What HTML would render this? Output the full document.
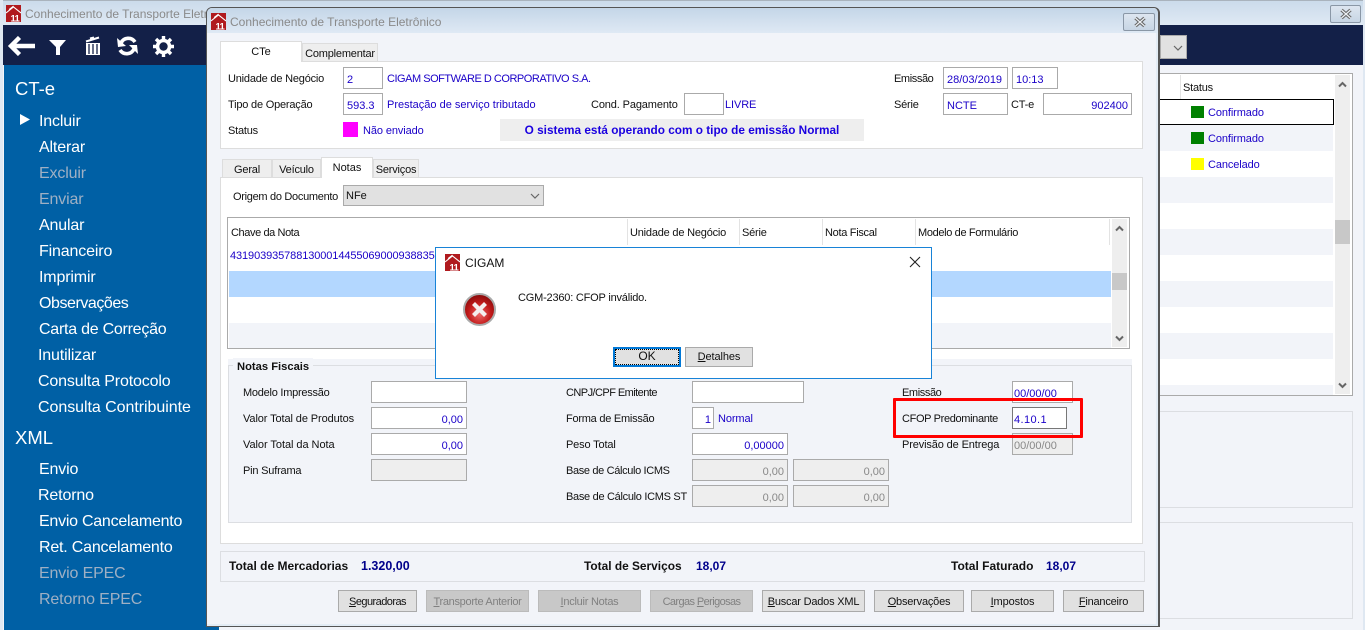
<!DOCTYPE html>
<html lang="pt">
<head>
<meta charset="utf-8">
<title>Conhecimento de Transporte Eletrônico</title>
<style>
html,body{margin:0;padding:0;width:1365px;height:630px;overflow:hidden;background:#f2f4f9}
body{position:relative;font:11px/16px "Liberation Sans",sans-serif;color:#111}
div{position:absolute;box-sizing:border-box;white-space:nowrap}
.l{height:18px;line-height:18px;letter-spacing:-.2px}
.b{color:#1a00c8;letter-spacing:-.1px}
.m{color:#fff;font-size:16px;left:39px;height:24px;line-height:24px;letter-spacing:-.15px}
.m.d{color:#9fb0c4}
.h{color:#fff;font-size:18.5px;left:15px;height:26px;line-height:26px}
.i{background:#fff;border:1px solid #aaa;color:#1a00c8;line-height:22px;height:22px;padding:1px 3px 0 3px;overflow:hidden}
.r{text-align:right}
.g{background:#eee;color:#888}
.btn{height:22px;top:590px;background:#e1e1e1;border:1px solid #aaa;text-align:center;line-height:22px;color:#111}
.off{background:#c8c8c8;color:#808080;border-color:#bbb}
.rw{left:1160px;width:173px;height:26px}
.tab{background:#eee;border:1px solid #ddd;text-align:center;letter-spacing:-.2px}
.bold{font-weight:bold;font-size:12px;letter-spacing:0}
.tot{color:#00008b;font-weight:bold;font-size:12px;letter-spacing:0}
</style>
</head>
<body>
<!-- outer window -->
<div style="left:0;top:0;width:1365px;height:25px;background:linear-gradient(#cbdbeb,#dfe9f4);border-top:1px solid #a9b3bd"></div>
<div style="left:0;top:0;width:3px;height:630px;background:#dfe8f2"></div>
<div style="left:1363px;top:0;width:2px;height:630px;background:#dfe8f2"></div>
<svg style="position:absolute;left:6px;top:5px" width="15" height="17" viewBox="0 0 15 17"><rect width="15" height="17" fill="#b01a1e"/><path d="M0 8L7.5 2L15 8" fill="none" stroke="#fff" stroke-width="1.1"/><path d="M3 4.5L7.5 1" stroke="#fff" stroke-width=".8"/><text x="4.5" y="16.5" font-size="9.5" font-weight="bold" letter-spacing="-.8" fill="#fff" font-family="Liberation Sans">11</text></svg>
<div class="l" style="left:25px;top:5px;font-size:12px;color:#8a8a8a;letter-spacing:0">Conhecimento de Transporte Eletrônico</div>
<div style="left:1330px;top:5px;width:31px;height:18px;border:1px solid #8a97a6;border-radius:2px;background:linear-gradient(#dde6f0,#c7d5e4)"><svg style="position:absolute;left:8px;top:2px" width="14" height="12" viewBox="0 0 14 12"><path d="M2.5 2L11.5 10M11.5 2L2.5 10" stroke="#666" stroke-width="3.4" fill="none"/><path d="M2.5 2L11.5 10M11.5 2L2.5 10" stroke="#eef2f6" stroke-width="1.2" fill="none"/></svg></div>

<div style="left:3px;top:25px;width:1360px;height:40px;background:#132048"></div>
<div style="left:4px;top:65px;width:215px;height:565px;background:#0060a5"></div>

<!-- toolbar icons -->
<svg style="position:absolute;left:8px;top:36px" width="27" height="20" viewBox="0 0 27 20"><path d="M11.5 1.5L3 10L11.5 18.5M4 10H27" fill="none" stroke="#fff" stroke-width="4.4"/></svg>
<svg style="position:absolute;left:49px;top:40px" width="18" height="15" viewBox="0 0 18 15"><path d="M0 0H17L11 7V15H7V7Z" fill="#fff"/></svg>
<svg style="position:absolute;left:85px;top:36px" width="16" height="19" viewBox="0 0 16 19"><path d="M1 5.5L14 1.5M5 2.5L9 1.5" stroke="#fff" stroke-width="2" fill="none"/><path d="M1 7H15V19H1Z" fill="#fff"/><path d="M4 8V18M8 8V18M12 8V18" stroke="#132048" stroke-width="1.3"/></svg>
<svg style="position:absolute;left:117px;top:36px" width="21" height="20" viewBox="0 0 21 20"><path d="M18 6A8 8 0 0 0 4 7" fill="none" stroke="#fff" stroke-width="3.6"/><path d="M0 2L9 10L1 11Z" fill="#fff"/><path d="M3 14A8 8 0 0 0 17 13" fill="none" stroke="#fff" stroke-width="3.6"/><path d="M21 18L12 9L20 9Z" fill="#fff"/></svg>
<svg style="position:absolute;left:153px;top:36px" width="21" height="21" viewBox="0 0 21 21"><circle cx="10.5" cy="10.5" r="6" fill="none" stroke="#fff" stroke-width="3.6"/><path d="M10.5 0V4M10.5 17V21M0 10.5H4M17 10.5H21M3 3L6 6M15 15L18 18M18 3L15 6M6 15L3 18" stroke="#fff" stroke-width="3.4"/></svg>

<!-- sidebar -->
<div class="h" style="top:76px">CT-e</div>
<svg style="position:absolute;left:20px;top:114px" width="10" height="11"><path d="M0 0L10 5.5L0 11Z" fill="#fff"/></svg>
<div class="m" style="top:110px">Incluir</div>
<div class="m" style="top:136px">Alterar</div>
<div class="m d" style="top:162px">Excluir</div>
<div class="m d" style="top:188px">Enviar</div>
<div class="m" style="top:214px">Anular</div>
<div class="m" style="top:240px">Financeiro</div>
<div class="m" style="top:266px">Imprimir</div>
<div class="m" style="top:292px;letter-spacing:-.45px">Observações</div>
<div class="m" style="top:318px;letter-spacing:-.25px">Carta de Correção</div>
<div class="m" style="top:344px;left:38px">Inutilizar</div>
<div class="m" style="top:370px;left:38px">Consulta Protocolo</div>
<div class="m" style="top:396px;left:38px;letter-spacing:-.05px">Consulta Contribuinte</div>
<div class="h" style="top:425px">XML</div>
<div class="m" style="top:458px">Envio</div>
<div class="m" style="top:484px;left:38px">Retorno</div>
<div class="m" style="top:510px;letter-spacing:-.25px">Envio Cancelamento</div>
<div class="m" style="top:536px;letter-spacing:-.2px">Ret. Cancelamento</div>
<div class="m d" style="top:562px">Envio EPEC</div>
<div class="m d" style="top:588px">Retorno EPEC</div>

<!-- back right grid -->
<div style="left:1160px;top:35px;width:27px;height:24px;background:#e1e1e1;border:1px solid #aaa"><svg style="position:absolute;left:12px;top:9px" width="10" height="6"><path d="M1 1L5 5L9 1" fill="none" stroke="#666" stroke-width="1.2"/></svg></div>
<div style="left:1150px;top:73px;width:203px;height:323px;background:#fff;border:1px solid #aaa;border-left:0"></div>
<div style="left:1180px;top:75px;width:1px;height:24px;background:#e3e3e3"></div>
<div class="l" style="left:1183px;top:79px">Status</div>
<div class="rw" style="top:99px;background:#fff;border:1px solid #000;border-left:0;width:174px"></div>
<div class="rw" style="top:125px;background:#f2f4f9"></div>
<div class="rw" style="top:177px;background:#f2f4f9"></div>
<div class="rw" style="top:229px;background:#f2f4f9"></div>
<div class="rw" style="top:281px;background:#f2f4f9"></div>
<div class="rw" style="top:333px;background:#f2f4f9"></div>
<div class="rw" style="top:385px;background:#f2f4f9;height:10px"></div>
<div style="left:1191px;top:106px;width:13px;height:12px;background:#008000"></div>
<div style="left:1191px;top:132px;width:13px;height:12px;background:#008000"></div>
<div style="left:1191px;top:158px;width:13px;height:12px;background:#ffff00"></div>
<div class="l b" style="left:1208px;top:104px">Confirmado</div>
<div class="l b" style="left:1208px;top:130px">Confirmado</div>
<div class="l b" style="left:1208px;top:156px">Cancelado</div>
<div style="left:1335px;top:75px;width:15px;height:319px;background:#eee"></div>
<div style="left:1335px;top:220px;width:15px;height:24px;background:#c8c8c8"></div>
<svg style="position:absolute;left:1338px;top:81px" width="9" height="7"><path d="M1 5.5L4.5 2L8 5.5" fill="none" stroke="#666" stroke-width="2"/></svg>
<svg style="position:absolute;left:1338px;top:382px" width="9" height="7"><path d="M1 1.5L4.5 5L8 1.5" fill="none" stroke="#666" stroke-width="2"/></svg>
<div style="left:1150px;top:411px;width:203px;height:97px;border:1px solid #dcdee2"></div>
<div style="left:1150px;top:522px;width:203px;height:97px;border:1px solid #dcdee2"></div>

<!-- child window -->
<div style="left:206px;top:7px;width:954px;height:620px;background:#f2f4f9;border:1px solid #555;border-right-width:2px;border-radius:6px 6px 0 0;box-shadow:inset -2px -2px 0 #e3ecf5"></div>
<div style="left:207px;top:8px;width:951px;height:25px;background:linear-gradient(#c4d6e8,#dfe9f4);border-radius:5px 5px 0 0"></div>
<svg style="position:absolute;left:211px;top:13px" width="15" height="17" viewBox="0 0 15 17"><rect width="15" height="17" fill="#b01a1e"/><path d="M0 8L7.5 2L15 8" fill="none" stroke="#fff" stroke-width="1.1"/><path d="M3 4.5L7.5 1" stroke="#fff" stroke-width=".8"/><text x="4.5" y="16.5" font-size="9.5" font-weight="bold" letter-spacing="-.8" fill="#fff" font-family="Liberation Sans">11</text></svg>
<div class="l" style="left:230px;top:13px;font-size:12px;color:#8a8a8a;letter-spacing:0">Conhecimento de Transporte Eletrônico</div>
<div style="left:1123px;top:13px;width:32px;height:18px;border:1px solid #8a97a6;border-radius:2px;background:linear-gradient(#dde6f0,#c7d5e4)"><svg style="position:absolute;left:9px;top:2px" width="14" height="12" viewBox="0 0 14 12"><path d="M2.5 2L11.5 10M11.5 2L2.5 10" stroke="#666" stroke-width="3.4" fill="none"/><path d="M2.5 2L11.5 10M11.5 2L2.5 10" stroke="#eef2f6" stroke-width="1.2" fill="none"/></svg></div>

<!-- header panel -->
<div style="left:220px;top:61px;width:923px;height:88px;background:#fff;border:1px solid #ddd"></div>
<div class="tab" style="left:302px;top:43px;width:76px;height:19px;line-height:20px">Complementar</div>
<div style="left:220px;top:41px;width:82px;height:21px;background:#fff;border:1px solid #ddd;border-bottom:0;text-align:center;line-height:21px;padding-right:0">CTe</div>

<div class="l" style="left:228px;top:70px">Unidade de Negócio</div>
<div class="i" style="left:343px;top:67px;width:40px">2</div>
<div class="l b" style="left:387px;top:70px;letter-spacing:-.48px">CIGAM SOFTWARE D CORPORATIVO S.A.</div>
<div class="l" style="left:228px;top:96px">Tipo de Operação</div>
<div class="i" style="left:343px;top:93px;width:40px">593.3</div>
<div class="l b" style="left:387px;top:96px;letter-spacing:0">Prestação de serviço tributado</div>
<div class="l" style="left:591px;top:96px;letter-spacing:-.13px">Cond. Pagamento</div>
<div class="i" style="left:684px;top:93px;width:40px"></div>
<div class="l b" style="left:725px;top:96px">LIVRE</div>
<div class="l" style="left:228px;top:122px">Status</div>
<div style="left:343px;top:122px;width:15px;height:15px;background:#f0f"></div>
<div class="l b" style="left:363px;top:122px">Não enviado</div>
<div class="l bold" style="left:500px;top:119px;width:364px;height:22px;line-height:23px;background:#eee;text-align:center;color:#1a00e0;font-size:11.8px">O sistema está operando com o tipo de emissão Normal</div>
<div class="l" style="left:894px;top:70px;letter-spacing:-.4px">Emissão</div>
<div class="i" style="left:943px;top:67px;width:65px">28/03/2019</div>
<div class="i" style="left:1012px;top:67px;width:46px">10:13</div>
<div class="l" style="left:894px;top:96px">Série</div>
<div class="i" style="left:943px;top:93px;width:65px">NCTE</div>
<div class="l" style="left:1011px;top:96px">CT-e</div>
<div class="i r" style="left:1043px;top:93px;width:89px">902400</div>

<!-- notes panel -->
<div style="left:220px;top:177px;width:923px;height:367px;background:#fff;border:1px solid #ddd"></div>
<div class="tab" style="left:222px;top:159px;width:50px;height:19px;line-height:20px">Geral</div>
<div class="tab" style="left:272px;top:159px;width:49px;height:19px;line-height:20px">Veículo</div>
<div class="tab" style="left:373px;top:159px;width:46px;height:19px;line-height:20px">Serviços</div>
<div style="left:321px;top:157px;width:52px;height:21px;background:#fff;border:1px solid #ddd;border-bottom:0;text-align:center;line-height:20px">Notas</div>

<div class="l" style="left:233px;top:188px;letter-spacing:-.3px">Origem do Documento</div>
<div style="left:343px;top:185px;width:201px;height:21px;background:#e1e1e1;border:1px solid #aaa;line-height:21px;padding-left:2px;color:#111">NFe<svg style="position:absolute;left:186px;top:7px" width="10" height="6"><path d="M1 1L5 5L9 1" fill="none" stroke="#666" stroke-width="1.2"/></svg></div>

<!-- inner grid -->
<div style="left:227px;top:217px;width:903px;height:132px;background:#fff;border:1px solid #aaa"></div>
<div style="left:229px;top:271px;width:882px;height:26px;background:#b3d7ff"></div>
<div style="left:229px;top:323px;width:882px;height:25px;background:#f2f4f9"></div>
<div style="left:627px;top:219px;width:1px;height:26px;background:#e3e3e3"></div>
<div style="left:739px;top:219px;width:1px;height:26px;background:#e3e3e3"></div>
<div style="left:822px;top:219px;width:1px;height:26px;background:#e3e3e3"></div>
<div style="left:915px;top:219px;width:1px;height:26px;background:#e3e3e3"></div>
<div style="left:1109px;top:219px;width:1px;height:26px;background:#e3e3e3"></div>
<div class="l" style="left:231px;top:224px;letter-spacing:-.4px">Chave da Nota</div>
<div class="l" style="left:630px;top:224px">Unidade de Negócio</div>
<div class="l" style="left:742px;top:224px">Série</div>
<div class="l" style="left:825px;top:224px;letter-spacing:-.3px">Nota Fiscal</div>
<div class="l" style="left:918px;top:224px;letter-spacing:-.35px">Modelo de Formulário</div>
<div class="l b" style="left:230px;top:247px;letter-spacing:-.1px">4319039357881300014455069000938835</div>
<div style="left:1112px;top:219px;width:15px;height:128px;background:#eee"></div>
<div style="left:1112px;top:273px;width:15px;height:17px;background:#c8c8c8"></div>
<svg style="position:absolute;left:1115px;top:225px" width="9" height="7"><path d="M1 5.5L4.5 2L8 5.5" fill="none" stroke="#666" stroke-width="2"/></svg>
<svg style="position:absolute;left:1115px;top:335px" width="9" height="7"><path d="M1 1.5L4.5 5L8 1.5" fill="none" stroke="#666" stroke-width="2"/></svg>

<!-- Notas Fiscais -->
<div style="left:228px;top:359px;width:904px;height:164px;background:#f2f4f9"></div>
<div style="left:228px;top:365px;width:904px;height:158px;border:1px solid #dcdee2"></div>
<div class="l bold" style="left:233px;top:358px;background:#f2f4f9;padding:0 4px;font-size:11.2px">Notas Fiscais</div>

<div class="l" style="left:243px;top:384px;letter-spacing:-.25px">Modelo Impressão</div>
<div class="i" style="left:371px;top:381px;width:96px"></div>
<div class="l" style="left:243px;top:410px;letter-spacing:-.1px">Valor Total de Produtos</div>
<div class="i r" style="left:371px;top:407px;width:96px">0,00</div>
<div class="l" style="left:243px;top:436px;letter-spacing:-.05px">Valor Total da Nota</div>
<div class="i r" style="left:371px;top:433px;width:96px">0,00</div>
<div class="l" style="left:243px;top:462px">Pin Suframa</div>
<div class="i g" style="left:371px;top:459px;width:96px"></div>

<div class="l" style="left:566px;top:384px;letter-spacing:-.55px">CNPJ/CPF Emitente</div>
<div class="i" style="left:692px;top:381px;width:112px"></div>
<div class="l" style="left:566px;top:410px;letter-spacing:-.25px">Forma de Emissão</div>
<div class="i r" style="left:692px;top:407px;width:22px;padding-right:2px">1</div>
<div class="l b" style="left:718px;top:410px">Normal</div>
<div class="l" style="left:566px;top:436px;letter-spacing:-.15px">Peso Total</div>
<div class="i r" style="left:692px;top:433px;width:96px">0,00000</div>
<div class="l" style="left:566px;top:462px;letter-spacing:-.35px">Base de Cálculo ICMS</div>
<div class="i r g" style="left:692px;top:459px;width:96px">0,00</div>
<div class="i r g" style="left:793px;top:459px;width:96px">0,00</div>
<div class="l" style="left:566px;top:488px;letter-spacing:-.3px">Base de Cálculo ICMS ST</div>
<div class="i r g" style="left:692px;top:485px;width:96px">0,00</div>
<div class="i r g" style="left:793px;top:485px;width:96px">0,00</div>

<div class="l" style="left:902px;top:384px;letter-spacing:-.4px">Emissão</div>
<div class="i" style="left:1012px;top:381px;width:61px;padding-left:1px">00/00/00</div>
<div class="l" style="left:902px;top:410px;letter-spacing:-.35px">CFOP Predominante</div>
<div class="i" style="left:1012px;top:407px;width:55px;border-color:#777;letter-spacing:.4px;padding-left:1px">4.10.1</div>
<div class="l" style="left:902px;top:436px;letter-spacing:-.13px">Previsão de Entrega</div>
<div class="i g" style="left:1012px;top:433px;width:61px;padding-left:1px">00/00/00</div>
<div style="left:893px;top:398px;width:190px;height:40px;border:3px solid #f00;border-radius:1px"></div>

<!-- totals -->
<div style="left:220px;top:551px;width:925px;height:31px;border:1px solid #dcdee2"></div>
<div class="l bold" style="left:229px;top:557px">Total de Mercadorias</div>
<div class="l tot" style="left:361px;top:557px;font-size:12.5px">1.320,00</div>
<div class="l bold" style="left:584px;top:557px;font-size:11.9px">Total de Serviços</div>
<div class="l tot" style="left:696px;top:557px">18,07</div>
<div class="l bold" style="left:951px;top:557px">Total Faturado</div>
<div class="l tot" style="left:1046px;top:557px">18,07</div>

<!-- buttons -->
<div class="btn" style="left:338px;width:79px;letter-spacing:-.55px"><u>S</u>eguradoras</div>
<div class="btn off" style="left:426px;width:103px;letter-spacing:-.3px"><u>T</u>ransporte Anterior</div>
<div class="btn off" style="left:538px;width:103px;letter-spacing:-.25px"><u>I</u>ncluir Notas</div>
<div class="btn off" style="left:650px;width:103px;letter-spacing:-.6px">Cargas <u>P</u>erigosas</div>
<div class="btn" style="left:762px;width:103px;letter-spacing:-.2px"><u>B</u>uscar Dados XML</div>
<div class="btn" style="left:874px;width:90px;letter-spacing:-.2px"><u>O</u>bservações</div>
<div class="btn" style="left:971px;width:83px;letter-spacing:-.1px"><u>I</u>mpostos</div>
<div class="btn" style="left:1063px;width:81px;letter-spacing:-.2px"><u>F</u>inanceiro</div>

<!-- dialog -->
<div style="left:435px;top:247px;width:497px;height:132px;background:#fff;border:1px solid #1883d7"></div>
<svg style="position:absolute;left:445px;top:254px" width="15" height="17" viewBox="0 0 15 17"><rect width="15" height="17" fill="#b01a1e"/><path d="M0 8L7.5 2L15 8" fill="none" stroke="#fff" stroke-width="1.1"/><path d="M3 4.5L7.5 1" stroke="#fff" stroke-width=".8"/><text x="4.5" y="16.5" font-size="9.5" font-weight="bold" letter-spacing="-.8" fill="#fff" font-family="Liberation Sans">11</text></svg>
<div class="l" style="left:465px;top:254px;font-size:12px;letter-spacing:0">CIGAM</div>
<svg style="position:absolute;left:909px;top:256px" width="12" height="12"><path d="M1 1L11 11M11 1L1 11" stroke="#222" stroke-width="1.1"/></svg>
<svg style="position:absolute;left:463px;top:293px" width="33" height="33" viewBox="0 0 33 33"><defs><radialGradient id="e" cx=".5" cy=".65" r=".6"><stop offset="0" stop-color="#ee6a6a"/><stop offset=".6" stop-color="#c21a1a"/><stop offset="1" stop-color="#8e0c0c"/></radialGradient></defs><circle cx="16.5" cy="16.5" r="15.5" fill="url(#e)" stroke="#aaa" stroke-width="2"/><path d="M10.5 10.5L22.5 22.5M22.5 10.5L10.5 22.5" stroke="#f4eeee" stroke-width="4.2"/></svg>
<div class="l" style="left:518px;top:289px">CGM-2360: CFOP inválido.</div>
<div style="left:613px;top:347px;width:68px;height:20px;background:#e1e1e1;border:2px solid #0078d7;text-align:center;line-height:15px;font-size:12px"><div style="left:0;top:0;right:0;bottom:0;border:1px dotted #000"></div>OK</div>
<div style="left:685px;top:347px;width:68px;height:20px;background:#e1e1e1;border:1px solid #aaa;text-align:center;line-height:19px;letter-spacing:-.1px"><u>D</u>etalhes</div>
</body>
</html>
